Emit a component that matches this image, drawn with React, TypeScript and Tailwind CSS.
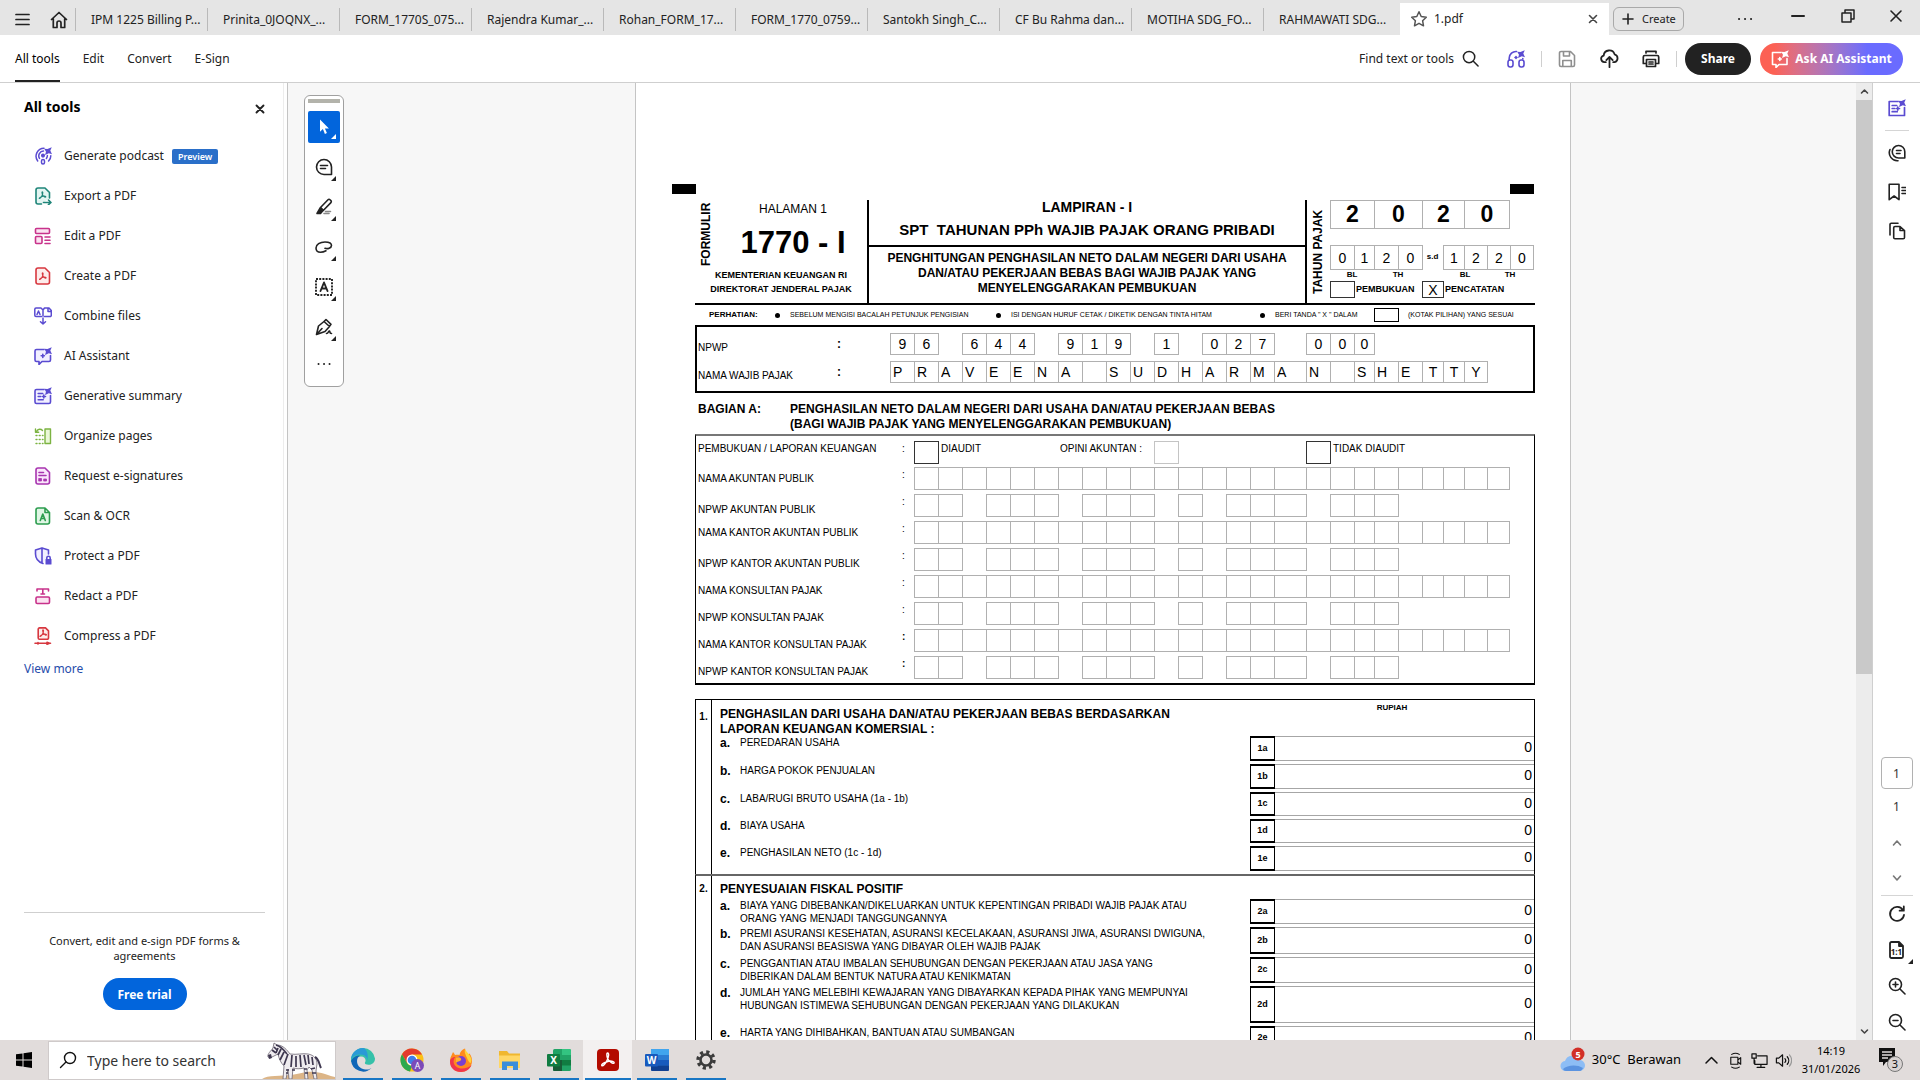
import type { ReactNode } from "react";
import clsx from "clsx";

const tabs = [
  "IPM 1225 Billing P...",
  "Prinita_0JOQNX_...",
  "FORM_1770S_075...",
  "Rajendra Kumar_...",
  "Rohan_FORM_17...",
  "FORM_1770_0759...",
  "Santokh Singh_C...",
  "CF Bu Rahma dan...",
  "MOTIHA SDG_FO...",
  "RAHMAWATI SDG...",
];

function Svg({ size = 18, box = 18, color = "#222", width = 1.6, children }: { size?: number; box?: number; color?: string; width?: number; children: ReactNode }) {
  return (
    <svg width={size} height={size} viewBox={`0 0 ${box} ${box}`} fill="none" stroke={color} strokeWidth={width} strokeLinecap="round" strokeLinejoin="round" className="shrink-0" aria-hidden="true">
      {children}
    </svg>
  );
}

// four-point star used on every AI tool
function Spark({ x = 14, y = 4, color = "#5a4bd1" }: { x?: number; y?: number; color?: string }) {
  return (
    <g transform={`translate(${x} ${y})`} fill={color} stroke="none">
      <path d="M3.8-3.8 2.3-.4 4 3.200 .8 2.200-3 4-2 .8-3.800-2.200-.6-2Z" />
    </g>
  );
}

function PdfMark({ x = 9, y = 9, color }: { x?: number; y?: number; color: string }) {
  return (
    <g transform={`translate(${x} ${y})`} stroke={color} strokeWidth="1.1">
      <path d="M-.2-3.6C.6-3.6.3-1.6-.3-.2-1 1.6-2.6 3.4-3.3 3 -3.6 2.2-.9.9.9.7 2.4.5 3.5.9 3.3 1.5 2.8 2.3.4.7-.2-1.4-.6-2.7-.7-3.6-.2-3.6Z" />
    </g>
  );
}

const purple = "#5a4bd1";

const tools: { name: string; badge?: string; icon: ReactNode }[] = [
  {
    name: "Generate podcast",
    badge: "Preview",
    icon: (
      <Svg color={purple} width={1.5}>
        <path d="M3.7 14A8 8 0 0 1 10 1.2M5.5 11.4A4.8 4.8 0 0 1 9.5 4.1M13.4 8.5c0 1.2-.4 2.2-1 3M16.8 8.8c0 2-.8 3.9-2.2 5.2" />
        <circle cx="9" cy="8.6" r="1.3" fill={purple} />
        <rect x="7.5" y="12.5" width="3" height="4.6" rx="1.5" />
        <Spark />
      </Svg>
    ),
  },
  {
    name: "Export a PDF",
    icon: (
      <Svg color="#1f8579">
        <path d="M7.5 17H4a2 2 0 0 1-2-2V3a2 2 0 0 1 2-2h7l4.5 4.5V11" fill="#e3f5f2" />
        <PdfMark x={8.5} y={8.5} color="#1f8579" />
        <path d="M9.5 15.5h7M14.5 13l2.500 2.500-2.500 2.200" />
      </Svg>
    ),
  },
  {
    name: "Edit a PDF",
    icon: (
      <Svg color="#c8328b">
        <rect x="1.5" y="1.5" width="14" height="5" rx="1" fill="#fbe3f1" />
        <rect x="1.5" y="9.5" width="6.5" height="7" rx="1" fill="#fbe3f1" />
        <path d="M11 10h5M11 13.2h5M11 16.5h5" />
      </Svg>
    ),
  },
  {
    name: "Create a PDF",
    icon: (
      <Svg color="#d7373f">
        <path d="M4 1h7l4.5 4.5V15a2 2 0 0 1-2 2H4a2 2 0 0 1-2-2V3a2 2 0 0 1 2-2Z" fill="#fdeceb" />
        <PdfMark x={8.8} y={9.5} color="#d7373f" />
      </Svg>
    ),
  },
  {
    name: "Combine files",
    icon: (
      <Svg color={purple} width={1.5}>
        <path d="M7.5 9.5H2A1.2 1.2 0 0 1 .8 8.3V2.2A1.2 1.2 0 0 1 2 1h5l2 2v6M9 3l1.500-2H15l2.300 2.500v4.800A1.200 1.200 0 0 1 16 9.500h-5.500M14 1.500v3h3M9 11v6M6.500 14.700 9 17l2.500-2.300" />
        <path d="M3 7.5 4.5 4 6 7.5" />
      </Svg>
    ),
  },
  {
    name: "AI Assistant",
    icon: (
      <Svg color={purple}>
        <path d="M10 2.5H2.5A1.5 1.5 0 0 0 1 4v9a1.500 1.500 0 0 0 1.500 1.500H5v3l3-3h7a1.500 1.500 0 0 0 1.500-1.500V8.500" fill="#f1efff" />
        <path d="M8.8 7.200v3.200M7.200 8.800h3.200" />
        <Spark />
      </Svg>
    ),
  },
  {
    name: "Generative summary",
    icon: (
      <Svg color={purple}>
        <path d="M10 2.5H2.5A1.5 1.5 0 0 0 1 4v11a1.500 1.500 0 0 0 1.500 1.500H15a1.500 1.500 0 0 0 1.500-1.500V8.500" fill="#f1efff" />
        <path d="M4.200 6.500h4.500M4.200 9.500h2.500M4.200 12.700h5M9.800 8v3M8.500 9.500h3" />
        <Spark />
      </Svg>
    ),
  },
  {
    name: "Organize pages",
    icon: (
      <Svg color="#7cb342" width={1.4}>
        <rect x="11" y="2" width="5.5" height="14.5" fill="#eaf8d8" />
        <path d="M8.500 3.500c-1.800-2-4.500-1.500-6 1M1.500 2v3.200h3.200" />
        <path d="M2 8.5h7M2 12.5h7M2 16.5h7" strokeDasharray="1 2.2" />
      </Svg>
    ),
  },
  {
    name: "Request e-signatures",
    icon: (
      <Svg color="#a835b0">
        <path d="M4 1h7l4.5 4.5V15a2 2 0 0 1-2 2H4a2 2 0 0 1-2-2V3a2 2 0 0 1 2-2Z" fill="#fae6fb" />
        <path d="M5 5.5h4.500M5 8.500h7" />
        <path d="M5 11.5h2.500V14H5ZM10 12h2.500v2H10Z" fill="#a835b0" strokeWidth=".8" />
      </Svg>
    ),
  },
  {
    name: "Scan & OCR",
    icon: (
      <Svg color="#2d9d4f">
        <path d="M4 1h7l4.5 4.5V15a2 2 0 0 1-2 2H4a2 2 0 0 1-2-2V3a2 2 0 0 1 2-2ZM11 1v4.500h4.500" fill="#e0f6e5" />
        <path d="M6.300 13.500 8.800 7l2.500 6.500M7.200 11.500h3.200" />
      </Svg>
    ),
  },
  {
    name: "Protect a PDF",
    icon: (
      <Svg color={purple}>
        <path d="M9 16.500C4.500 15 1.500 11.500 1.500 7V3L8 .9 14.500 3v4M8 1v15" fill="#f1efff" />
        <rect x="11.5" y="12" width="6" height="5.5" rx=".5" fill={purple} stroke="none" />
        <path d="M12.800 12v-1a1.700 1.700 0 0 1 3.400 0v1" />
      </Svg>
    ),
  },
  {
    name: "Redact a PDF",
    icon: (
      <Svg color="#c8328b">
        <rect x="2" y="10" width="13.5" height="6.5" rx="1.2" fill="#fbe3f1" />
        <path d="M3 4V2h11.500v2M8.800 2v5M7 7h3.500" />
      </Svg>
    ),
  },
  {
    name: "Compress a PDF",
    icon: (
      <Svg color="#d7373f">
        <path d="M5.500.9h6l3 3v7a1.300 1.300 0 0 1-1.300 1.300H5.500A1.300 1.300 0 0 1 4.200 10.900V2.200A1.300 1.300 0 0 1 5.500.9Z" fill="#fdeceb" />
        <PdfMark x={9.2} y={6.5} color="#d7373f" />
        <path d="M1 16.300h15.500M4 15.500v1.600M13 15.300l2.500 1-2.500 1" />
      </Svg>
    ),
  },
];

function TitleBar() {
  return (
    <div className="flex h-[35px] shrink-0 bg-[#e5e5e5] text-[12px] text-[#222]">
      <div className="flex w-[75px] shrink-0 items-center gap-5 pl-[15px] pt-1">
        <button aria-label="Menu">
          <Svg size={15} box={15} width={1.7}>
            <path d="M1 2.5h13M1 7.5h13M1 12.5h13" />
          </Svg>
        </button>
        <button aria-label="Home">
          <Svg size={18} width={1.7}>
            <path d="M1.500 8.500 9 1.500l7.500 7M3.300 7.500v9H7V12a2 2 0 0 1 4 0v4.500h3.700v-9" />
          </Svg>
        </button>
      </div>
      <div className="flex min-w-0 flex-1 pr-[5px] pt-2">
        {tabs.map((t) => (
          <button key={t} className="h-[23px] min-w-0 flex-1 overflow-hidden whitespace-nowrap border-l border-[#b9b9b9] pl-[15px] text-left">
            {t}
          </button>
        ))}
      </div>
      <div className="mt-[3px] flex w-[209px] shrink-0 items-center bg-white px-[10px]">
        <Svg size={18} color="#555" width={1.5}>
          <path d="m9 1.800 2.200 4.700 5.100.7-3.700 3.500.9 5.100L9 13.300l-4.500 2.500.9-5.100L1.700 7.200l5.100-.7Z" />
        </Svg>
        <span className="ml-1.5 flex-1">1.pdf</span>
        <button aria-label="Close tab">
          <Svg size={12} box={12} color="#444">
            <path d="m2.500 2.500 7 7M9.500 2.500l-7 7" />
          </Svg>
        </button>
      </div>
      <button className="ml-1 mt-[7px] flex h-[24px] w-[71px] shrink-0 items-center gap-2 rounded-md border border-[#a9a9a9] pl-2 text-[11px]">
        <Svg size={12} box={12}>
          <path d="M6 1v10M1 6h10" />
        </Svg>
        Create
      </button>
      <div className="flex w-[236px] shrink-0 items-center justify-end pb-1">
        <button aria-label="More" className="grid w-[56px] place-items-center pt-1.5">
          <Svg size={16} box={16} width={2}>
            <path d="M2 8h.1M8 8h.1M14 8h.1" />
          </Svg>
        </button>
        <button aria-label="Minimize" className="grid w-[50px] place-items-center">
          <Svg size={16} box={16} width={2}>
            <path d="M2 8h12" />
          </Svg>
        </button>
        <button aria-label="Restore" className="grid w-[49px] place-items-center">
          <Svg size={14} box={14} width={1.5}>
            <path d="M1 4h9v9H1ZM4 4V1h9v9h-3" />
          </Svg>
        </button>
        <button aria-label="Close" className="grid w-[48px] place-items-center">
          <Svg size={14} box={14}>
            <path d="m2 2 10 10M12 2 2 12" />
          </Svg>
        </button>
      </div>
    </div>
  );
}

function ToolBar() {
  return (
    <div className="flex h-[48px] shrink-0 items-center border-b border-[#cfcfcf] bg-white pl-[15px] pr-[17px] text-[12px] text-[#222]">
      <nav className="flex h-full flex-1 gap-[23px] pt-px">
        <button className="border-b-2 border-[#222] pt-0.5 text-black">All tools</button>
        <button>Edit</button>
        <button>Convert</button>
        <button>E-Sign</button>
      </nav>
      <button className="flex items-center gap-2">
        Find text or tools
        <Svg size={17}>
          <circle cx="7.5" cy="7.5" r="6" />
          <path d="m12 12 5 5" />
        </Svg>
      </button>
      <button aria-label="Listen" className="ml-4 grid w-[42px] place-items-center">
        <Svg color={purple}>
          <path d="M2.200 10V8A6.800 6.800 0 0 1 9.500 1.500M15.800 9v-.5" />
          <rect x="1" y="10" width="5" height="7" rx="2.200" />
          <rect x="12" y="10" width="5" height="7" rx="2.200" />
          <path d="M9 6.500v2M8 7.500h2" />
          <Spark />
        </Svg>
      </button>
      <span className="mx-1 h-4 w-px bg-[#cfcfcf]" />
      <button aria-label="Save" className="grid w-[42px] place-items-center">
        <Svg color="#8f8f8f">
          <path d="M3 1.500h9.500l4 4V15a1.500 1.500 0 0 1-1.500 1.500H3A1.500 1.500 0 0 1 1.500 15V3A1.500 1.500 0 0 1 3 1.500ZM5.500 1.500v4.500h6V1.500M4.800 16v-5.500h8.500V16" />
        </Svg>
      </button>
      <button aria-label="Upload" className="grid w-[42px] place-items-center">
        <Svg size={19} width={1.7}>
          <path d="M5.500 12.500H4.200A3.200 3.200 0 0 1 3.500 6.200 5.300 5.300 0 0 1 13.800 5a3.900 3.900 0 0 1 0 7.500h-1.300M9 17.200V8M6 10.500l3-3 3 3" />
        </Svg>
      </button>
      <button aria-label="Print" className="grid w-[42px] place-items-center">
        <Svg width={1.7}>
          <path d="M3.500 13.500H1.300V7A1.500 1.500 0 0 1 2.800 5.500h12.400A1.500 1.500 0 0 1 16.700 7v6.500h-2.200M4 3V1.300h10V3M4.500 9.500h9v7h-9ZM7 12h4M7 14h4" />
        </Svg>
      </button>
      <span className="ml-1 mr-2 h-4 w-px bg-[#cfcfcf]" />
      <button className="h-8 w-[66px] rounded-full bg-[#222] font-bold text-white">Share</button>
      <button className="ml-[9px] flex h-8 w-[143px] items-center justify-center gap-1.5 whitespace-nowrap rounded-full bg-linear-to-r from-[#fc6154] from-10% to-[#6a6bff] to-75% font-bold text-white">
        <Svg color="#fff">
          <path d="M10 2.500H1.500v12H5v3l3-3h8v-6M8.800 7.500v3M7.300 9h3" />
          <Spark color="#fff" />
        </Svg>
        Ask AI Assistant
      </button>
    </div>
  );
}

function Sidebar() {
  return (
    <aside className="flex w-[288px] shrink-0 border-r border-[#c4c4c4] bg-white text-[#222]">
      <div className="flex flex-1 flex-col border-r border-[#ededed] pl-6 pr-[18px] pt-[13px]">
        <div className="flex h-5 items-center justify-between">
          <h2 className="text-[14px] font-bold text-black">All tools</h2>
          <button aria-label="Close panel" className="pt-1.5">
            <Svg size={10} box={10} width={1.9}>
              <path d="m1.500 1.500 7 7M8.500 1.500l-7 7" />
            </Svg>
          </button>
        </div>
        <ul className="mt-5 text-[12px]">
          {tools.map((t) => (
            <li key={t.name}>
              <button className="flex h-10 items-center gap-3 pl-2.5">
                {t.icon}
                {t.name}
                {t.badge && <span className="-ml-1 rounded-xs bg-[#2a6fc9] px-1.5 text-[9px] font-semibold leading-[15px] text-white">{t.badge}</span>}
              </button>
            </li>
          ))}
        </ul>
        <a href="#" className="text-[12px] leading-[26px] text-[#274dab]">View more</a>
        <div className="mt-auto border-t border-[#cfcfcf] px-4 pb-[30px] pt-5 text-center text-[11px] leading-[15px]">
          Convert, edit and e-sign PDF forms &amp; agreements
          <button className="mx-auto mt-[15px] block h-8 w-[84px] rounded-full bg-[#0265dc] text-[12px] font-bold text-white">Free trial</button>
        </div>
      </div>
      <div className="w-[3px]" />
    </aside>
  );
}

function QuickTool({ label, children }: { label: string; children: ReactNode }) {
  return (
    <button aria-label={label} className="relative grid h-10 w-8 place-items-center">
      {children}
      <svg className="absolute bottom-1.5 right-1" width="5" height="5" viewBox="0 0 5 5" aria-hidden="true">
        <path d="M5 0v5H0Z" fill="#222" />
      </svg>
    </button>
  );
}

function QuickTools() {
  return (
    <div className="mt-3 flex h-[292px] w-10 flex-col items-center rounded-md border border-[#a0a0a0] bg-white pt-[3px]">
      <div className="h-1 w-8 bg-[#b3b3ab]" />
      <button aria-label="Select" className="relative mt-2 grid h-8 w-8 shrink-0 place-items-center rounded-xs bg-[#0265dc]">
        <svg width="12" height="16" viewBox="0 0 12 16" aria-hidden="true">
          <path d="M2 .5v12.200l2.900-2.600 2 4.800 2-.9-2-4.600h4Z" fill="#fff" />
        </svg>
        <svg className="absolute bottom-1 right-1" width="5" height="5" viewBox="0 0 5 5" aria-hidden="true">
          <path d="M5 0v5H0Z" fill="#fff" />
        </svg>
      </button>
      <div className="mt-1">
        <QuickTool label="Comment">
          <Svg>
            <path d="M9 1.500a7.500 7.500 0 1 0 0 15h7.500V9A7.500 7.500 0 0 0 9 1.500ZM5.500 7.500h7M5.500 10.500h5" />
          </Svg>
        </QuickTool>
        <QuickTool label="Highlight">
          <Svg>
            <path d="M5.500 9.500 13 1.700a1.400 1.400 0 0 1 2 0l.9.9a1.400 1.400 0 0 1 0 2L8.500 12.300Z" />
            <path d="M5.200 10 2 15.500h3.500L8 12.500Z" fill="#222" />
            <path d="M9 15.500h5M10.500 13.500h5" stroke="#888" />
          </Svg>
        </QuickTool>
        <QuickTool label="Draw">
          <Svg>
            <path d="M11 12.800c-1.500.8-3.500 1.500-5.500 1.500-3 0-4.500-1.800-4.500-4.300 0-3.500 4-6 9-6 4 0 6.500 1.200 6.500 3.500 0 2.500-4 3.800-6.500 2.800" />
          </Svg>
        </QuickTool>
        <QuickTool label="Select text">
          <Svg width={1.9}>
            <rect x="1" y="1" width="16" height="16" strokeDasharray="2 1.200" strokeLinecap="butt" />
            <path d="M5.500 13 9 4.500l3.500 8.500M7 10.500h4" />
          </Svg>
        </QuickTool>
        <QuickTool label="Sign">
          <Svg>
            <path d="M1.500 16.500 3.500 8 9 3.500l5.500 5L10 13.500ZM9 3.500l2-2 5 4.800-1.700 2.200M2 16l5-5.500M11.500 15.500c2 0 2-3 3-2.500s-.5 2.500 2 2.500" />
          </Svg>
        </QuickTool>
      </div>
      <button aria-label="More tools" className="mt-2">
        <Svg width={1.9}>
          <path d="M3.500 9h.1M9 9h.1M14.500 9h.1" />
        </Svg>
      </button>
    </div>
  );
}

// "." leaves a gap between boxes, "#" is an empty box
function Comb({ label, pattern, className }: { label: string; pattern: string; className: string }) {
  return (
    <div className={clsx("grid", className)}>
      {pattern.split("").map((c, i) =>
        c === "." ? (
          <span key={i} />
        ) : (
          <input
            key={i}
            aria-label={`${label} ${i + 1}`}
            maxLength={1}
            defaultValue={c === "#" ? "" : c.trim()}
            className={clsx(
              "h-full w-[calc(100%+1px)] min-w-0 border border-[#b0b0b0] bg-transparent text-[14px] leading-4 outline-none",
              /[A-Z]/.test(c) && i < 22 ? "pl-0.5 text-left" : "text-center",
            )}
          />
        ),
      )}
    </div>
  );
}

const headerComb = "grid-cols-[repeat(16,24px)_32px_24px_24px_20px_24px_24px_21px_21px_23px]";
const sectionComb = "h-[23px] grid-cols-[repeat(15,24px)_32px_24px_24px_20px_24px_24px_21px_21px_23px_22px]";

function FormHeader() {
  return (
    <header className="flex h-[105px] border-b-2 border-black">
      <div className="w-[174px] border-r-2 border-black">
        <div className="flex h-[68px]">
          <div className="w-[22px] rotate-180 text-center text-[12px] font-bold leading-[22px] [writing-mode:vertical-rl]">FORMULIR</div>
          <div className="flex-1 pl-0.5 text-center">
            <div className="text-[12px] leading-[18px]">HALAMAN 1</div>
            <div className="pt-2 text-[31px] font-bold leading-[34px]">1770 - I</div>
          </div>
        </div>
        <div className="text-center text-[9px] font-bold leading-[14px]">
          KEMENTERIAN KEUANGAN RI
          <br />
          DIREKTORAT JENDERAL PAJAK
        </div>
      </div>
      <div className="flex-1 border-r-2 border-black text-center font-bold">
        <div className="flex h-[47px] flex-col justify-between border-b-2 border-black pb-2 leading-[15px]">
          <div className="text-[14px]">LAMPIRAN - I</div>
          <div className="whitespace-pre text-[15px]">SPT  TAHUNAN PPh WAJIB PAJAK ORANG PRIBADI</div>
        </div>
        <div className="whitespace-nowrap pt-1 text-[12px] leading-[15px]">
          PENGHITUNGAN PENGHASILAN NETO DALAM NEGERI DARI USAHA
          <br />
          DAN/ATAU PEKERJAAN BEBAS BAGI WAJIB PAJAK YANG
          <br />
          MENYELENGGARAKAN PEMBUKUAN
        </div>
      </div>
      <div className="flex w-[228px]">
        <div className="w-[23px] rotate-180 whitespace-nowrap text-center text-[12px] font-bold leading-[23px] [writing-mode:vertical-rl]">TAHUN PAJAK</div>
        <div className="flex-1 text-[8px] font-bold">
          <div className="grid h-[29px] grid-cols-[44px_48px_42px_45px]">
            {["2", "0", "2", "0"].map((d, i) => (
              <input key={i} aria-label={`Tahun ${i + 1}`} defaultValue={d} maxLength={1} className="h-full w-[calc(100%+1px)] min-w-0 border border-[#b0b0b0] text-center text-[23px] font-bold leading-6 outline-none" />
            ))}
          </div>
          <div className="mt-4 flex h-[25px] font-normal">
            <Comb label="Dari" pattern="0120" className="grid-cols-[24px_20px_24px_24px]" />
            <span className="w-[21px] pt-1.5 text-center font-bold">s.d</span>
            <Comb label="Sampai" pattern="1220" className="grid-cols-[21px_23px_23px_23px]" />
          </div>
          <div className="grid h-[11px] grid-cols-[44px_48px_21px_44px_46px] text-center leading-[10px]">
            <span>BL</span>
            <span>TH</span>
            <span />
            <span>BL</span>
            <span>TH</span>
          </div>
          <div className="flex h-[17px] items-center text-[9px]">
            <input id="pembukuan" type="checkbox" className="h-[17px] w-[25px] appearance-none border border-[#333]" />
            <label htmlFor="pembukuan" className="w-[67px] pl-px">PEMBUKUAN</label>
            <input
              id="pencatatan"
              type="checkbox"
              defaultChecked
              className="grid h-[17px] w-[22px] appearance-none place-items-center border border-[#333] checked:before:text-[14px] checked:before:font-normal checked:before:leading-4 checked:before:content-['X']"
            />
            <label htmlFor="pencatatan" className="pl-px">PENCATATAN</label>
          </div>
        </div>
      </div>
    </header>
  );
}

const auditRows = [
  { label: "NAMA AKUNTAN PUBLIK", npwp: false, high: true },
  { label: "NPWP AKUNTAN PUBLIK", npwp: true },
  { label: "NAMA KANTOR AKUNTAN PUBLIK", npwp: false, high: true },
  { label: "NPWP KANTOR AKUNTAN PUBLIK", npwp: true },
  { label: "NAMA KONSULTAN PAJAK", npwp: false },
  { label: "NPWP KONSULTAN PAJAK", npwp: true },
  { label: "NAMA KANTOR KONSULTAN PAJAK", npwp: false, bold: true },
  { label: "NPWP KANTOR KONSULTAN PAJAK", npwp: true, bold: true },
];

function AuditSection() {
  return (
    <section className="border border-y-2 border-black border-t-[#777] pt-[5px] text-[10px] leading-3">
      <div className="flex h-[26px]">
        <span className="w-[206px] pl-0.5 pt-0.5">PEMBUKUAN / LAPORAN KEUANGAN</span>
        <span className="w-3 pt-0.5">:</span>
        <input id="diaudit" type="checkbox" className="h-[23px] w-[25px] appearance-none border border-[#333]" />
        <label htmlFor="diaudit" className="w-[121px] pl-0.5 pt-0.5">DIAUDIT</label>
        <label htmlFor="opini" className="w-[94px] pt-0.5">OPINI AKUNTAN :</label>
        <input id="opini" className="h-[23px] w-[25px] border border-[#c4c4c4]" />
        <input id="tidak" type="checkbox" className="ml-[127px] h-[23px] w-[25px] appearance-none border border-[#333]" />
        <label htmlFor="tidak" className="pl-0.5 pt-0.5">TIDAK DIAUDIT</label>
      </div>
      {auditRows.map((r) => (
        <div key={r.label} className="flex h-[27px]">
          <span className={clsx("w-[206px] pl-0.5", r.high ? "pt-1.5" : "pt-2.5")}>{r.label}</span>
          <span className={clsx("w-3 pt-0.5", r.bold && "font-bold")}>:</span>
          <Comb label={r.label} pattern={r.npwp ? "##.###.###.#.###.###" : "#########################"} className={sectionComb} />
        </div>
      ))}
    </section>
  );
}

type Line = { code: string; text: string[]; height: string };

const commercial: Line[] = [
  { code: "1a", text: ["PEREDARAN USAHA"], height: "h-[28px]" },
  { code: "1b", text: ["HARGA POKOK PENJUALAN"], height: "h-[28px]" },
  { code: "1c", text: ["LABA/RUGI BRUTO USAHA (1a - 1b)"], height: "h-[27px]" },
  { code: "1d", text: ["BIAYA USAHA"], height: "h-[27px]" },
  { code: "1e", text: ["PENGHASILAN NETO (1c - 1d)"], height: "h-[28px]" },
];

const fiscal: Line[] = [
  { code: "2a", text: ["BIAYA YANG DIBEBANKAN/DIKELUARKAN UNTUK KEPENTINGAN PRIBADI WAJIB PAJAK ATAU", "ORANG YANG MENJADI TANGGUNGANNYA"], height: "h-[28px]" },
  { code: "2b", text: ["PREMI ASURANSI KESEHATAN, ASURANSI KECELAKAAN, ASURANSI JIWA, ASURANSI DWIGUNA,", "DAN ASURANSI BEASISWA YANG DIBAYAR OLEH WAJIB PAJAK"], height: "h-[30px]" },
  { code: "2c", text: ["PENGGANTIAN ATAU IMBALAN SEHUBUNGAN DENGAN PEKERJAAN ATAU JASA YANG", "DIBERIKAN DALAM BENTUK NATURA ATAU KENIKMATAN"], height: "h-[29px]" },
  { code: "2d", text: ["JUMLAH YANG MELEBIHI KEWAJARAN YANG DIBAYARKAN KEPADA PIHAK YANG MEMPUNYAI", "HUBUNGAN ISTIMEWA SEHUBUNGAN DENGAN PEKERJAAN YANG DILAKUKAN"], height: "h-[40px]" },
  { code: "2e", text: ["HARTA YANG DIHIBAHKAN, BANTUAN ATAU SUMBANGAN"], height: "h-[27px]" },
];

function AmountLine({ line }: { line: Line }) {
  return (
    <div className={clsx("flex pb-[3px]", line.height)}>
      <span className="w-5 text-[12px] font-bold leading-[14px]">{line.code[1]}.</span>
      <label htmlFor={line.code} className="flex-1 whitespace-nowrap text-[10px] leading-[13px]">
        {line.text.map((t) => (
          <span key={t} className="block">{t}</span>
        ))}
      </label>
      <span className="grid w-[25px] place-items-center border border-y-2 border-black text-[9px] font-bold">{line.code}</span>
      <input id={line.code} defaultValue="0" className="w-[259px] border-y border-[#a6a6a6] pb-0.5 pr-0.5 text-right text-[14px] outline-none" />
    </div>
  );
}

function TaxForm() {
  return (
    <main className="w-[936px] shrink-0 border-x border-[#c4c4c4] bg-white pt-[101px] font-['Liberation_Sans',Arial,sans-serif] text-black">
      <div className="flex justify-between px-9">
        <div className="h-2.5 w-6 bg-black" />
        <div className="h-2.5 w-6 bg-black" />
      </div>
      <div className="ml-[59px] mr-[35px] mt-1.5">
        <FormHeader />
        <div className="flex h-5 items-center whitespace-nowrap pl-[14px] text-[7px]">
          <span className="w-[66px] text-[8px] font-bold">PERHATIAN:</span>
          <span className="flex w-[221px] items-center gap-2.5">
            <i className="size-[5px] rounded-full bg-black" />
            SEBELUM MENGISI BACALAH PETUNJUK PENGISIAN
          </span>
          <span className="flex w-[264px] items-center gap-2.5">
            <i className="size-[5px] rounded-full bg-black" />
            ISI DENGAN HURUF CETAK / DIKETIK DENGAN TINTA HITAM
          </span>
          <span className="flex w-[114px] items-center gap-2.5">
            <i className="size-[5px] rounded-full bg-black" />
            BERI TANDA " X " DALAM
          </span>
          <span className="h-[14px] w-[25px] border border-black" />
          <span className="ml-[9px]">(KOTAK PILIHAN) YANG SESUAI</span>
        </div>

        <section className="grid grid-cols-[140px_53px_auto] grid-rows-[22px_22px] gap-y-1.5 border-2 border-black pb-2 pt-1.5 text-[10px] leading-[14px]">
          <span className="self-end pl-px">NPWP</span>
          <span className="self-center text-[12px] font-bold">:</span>
          <Comb label="NPWP" pattern="96.644.919.1.027.000" className={headerComb} />
          <span className="self-end pl-px">NAMA WAJIB PAJAK</span>
          <span className="self-center text-[12px] font-bold">:</span>
          <Comb label="Nama wajib pajak" pattern="PRAVEENA SUDHARMAN SHETTY" className={headerComb} />
        </section>

        <h2 className="flex pb-0.5 pl-[3px] pt-[9px] text-[12px] font-bold leading-[15px]">
          <span className="w-[92px]">BAGIAN A:</span>
          <span>
            PENGHASILAN NETO DALAM NEGERI DARI USAHA DAN/ATAU PEKERJAAN BEBAS
            <br />
            (BAGI WAJIB PAJAK YANG MENYELENGGARAKAN PEMBUKUAN)
          </span>
        </h2>

        <AuditSection />

        <section className="mt-[14px] flex border-x border-t border-black">
          <span className="w-4 border-r border-black pt-2.5 text-center text-[10px] font-bold leading-[14px]">1.</span>
          <div className="flex-1 pl-2">
            <div className="flex h-9 font-bold">
              <h3 className="flex-1 whitespace-nowrap pt-[7px] text-[12px] leading-[15px]">
                PENGHASILAN DARI USAHA DAN/ATAU PEKERJAAN BEBAS BERDASARKAN
                <br />
                LAPORAN KEUANGAN KOMERSIAL :
              </h3>
              <span className="w-[284px] pt-[3px] text-center text-[8px] leading-[10px]">RUPIAH</span>
            </div>
            {commercial.map((l) => (
              <AmountLine key={l.code} line={l} />
            ))}
          </div>
        </section>
        <section className="flex border-x border-t-2 border-black border-t-[#666]">
          <span className="w-4 border-r border-black pt-1.5 text-center text-[10px] font-bold leading-[14px]">2.</span>
          <div className="flex-1 pb-8 pl-2">
            <h3 className="pb-[3px] pt-1.5 text-[12px] font-bold leading-[14px]">PENYESUAIAN FISKAL POSITIF</h3>
            {fiscal.map((l) => (
              <AmountLine key={l.code} line={l} />
            ))}
          </div>
        </section>
      </div>
    </main>
  );
}

function ScrollBar() {
  return (
    <div className="flex w-4 shrink-0 flex-col items-center bg-[#ececec]">
      <div className="grid h-[17px] place-items-center">
        <Svg size={9} box={9} color="#444">
          <path d="m1.500 6 3-3 3 3" />
        </Svg>
      </div>
      <div className="h-[574px] w-full bg-[#c9c9c9]" />
      <div className="mt-auto grid h-[17px] place-items-center">
        <Svg size={9} box={9} color="#444">
          <path d="m1.500 3 3 3 3-3" />
        </Svg>
      </div>
    </div>
  );
}

function RightRail() {
  return (
    <aside className="flex w-12 shrink-0 flex-col items-center border-l border-[#cfcfcf] bg-white pt-[5px] text-[12px] text-[#333]">
      <button aria-label="Generative summary" className="grid h-10 place-items-center">
        <Svg color={purple} width={1.7}>
          <path d="M10 2.500H1.200v14h15.300v-8M4.200 6.500h4.500M4.200 9.500h2.500M4.200 12.700h5M9.800 8v3M8.500 9.500h3" />
          <Spark />
        </Svg>
      </button>
      <div className="my-0.5 h-px w-6 bg-[#d5d5d5]" />
      <button aria-label="Comments" className="grid h-[39px] place-items-center">
        <Svg>
          <path d="M10.500 1.500a6.200 6.200 0 1 0 0 12.500h6.300V7.700a6.200 6.200 0 0 0-6.300-6.200ZM8.500 6.500h4.500M8.500 9.500h3.500M2 5.500a8 8 0 0 0 8 11.200" />
        </Svg>
      </button>
      <button aria-label="Bookmarks" className="grid h-[39px] place-items-center">
        <Svg>
          <path d="M1.200 1.200h9.800v15.500l-4.900-3.700-4.900 3.700ZM14 4.500h3.500M14 7.500h3.500M14 10.500h3.500" />
        </Svg>
      </button>
      <button aria-label="Pages" className="grid h-[39px] place-items-center">
        <Svg>
          <path d="M7 4.500h5l4.500 4V15.500a1.300 1.300 0 0 1-1.300 1.300H7a1.300 1.300 0 0 1-1.300-1.300V5.800A1.300 1.300 0 0 1 7 4.500ZM12 4.500v4h4.500M2 13V2.500a1.300 1.300 0 0 1 1.300-1.300H10" />
        </Svg>
      </button>
      <input aria-label="Page" defaultValue="1" className="mt-auto h-8 w-8 rounded border border-[#b1b1b1] text-center" />
      <span className="h-9 leading-9">1</span>
      <button aria-label="Previous page" className="grid h-[35px] place-items-center">
        <Svg size={10} box={10} color="#777">
          <path d="m1.500 7 3.500-4 3.500 4" />
        </Svg>
      </button>
      <button aria-label="Next page" className="grid h-[35px] place-items-center">
        <Svg size={10} box={10} color="#777">
          <path d="m1.500 3 3.500 4 3.500-4" />
        </Svg>
      </button>
      <div className="h-px w-8 bg-[#d5d5d5]" />
      <button aria-label="Rotate" className="grid h-9 place-items-center">
        <Svg width={1.8}>
          <path d="M15 5.200A7 7 0 1 0 16 9.800M15.800 1.500v4.200h-4.200" />
        </Svg>
      </button>
      <button aria-label="Actual size" className="relative grid h-9 w-9 place-items-center">
        <Svg width={1.8}>
          <path d="M3.500 1H11l4 4v10.500a1.500 1.500 0 0 1-1.500 1.500h-10A1.500 1.500 0 0 1 2 15.500v-13A1.500 1.500 0 0 1 3.500 1ZM11 1v4h4" />
          <text x="8.5" y="14" fontSize="8" fontWeight="700" textAnchor="middle" fill="#222" stroke="none">1:1</text>
        </Svg>
        <svg className="absolute bottom-1 right-0.5" width="5" height="5" viewBox="0 0 5 5" aria-hidden="true">
          <path d="M5 0v5H0Z" fill="#222" />
        </svg>
      </button>
      <button aria-label="Zoom in" className="grid h-9 place-items-center">
        <Svg>
          <circle cx="7.5" cy="7.5" r="6" />
          <path d="m12 12 5 5M7.500 5v5M5 7.500h5" />
        </Svg>
      </button>
      <button aria-label="Zoom out" className="grid h-9 place-items-center">
        <Svg>
          <circle cx="7.5" cy="7.5" r="6" />
          <path d="m12 12 5 5M5 7.500h5" />
        </Svg>
      </button>
    </aside>
  );
}

function AppIcon({ name, children, active }: { name: string; children: ReactNode; active?: boolean }) {
  return (
    <button aria-label={name} className={clsx("flex h-10 w-[49px] flex-col items-center", active && "bg-[#f3f0f0]")}>
      <svg width="24" height="24" viewBox="0 0 24 24" className="mt-2" aria-hidden="true">
        {children}
      </svg>
      <span className={clsx("mt-auto h-0.5 bg-[#1876c4]", active ? "w-[46px]" : "w-10")} />
    </button>
  );
}

function Zebra() {
  return (
    <svg width="74" height="39" viewBox="0 0 74 39" className="shrink-0" aria-hidden="true">
      <path d="M0 39c4-5 20-4 30-5s14-4 24-3 14 4 20 5v3Z" fill="#dcb587" />
      <path d="M7 16c-1-3 3-6 5-9l1-5 3 2c6 0 10 5 13 9 7 1 13-1 18 0 6 1 9 5 9 10l-1 7 1 8h-3l-2-9-3-3-2 3 1 9h-3l-1-11c-4 1-8 1-11 0l-1 11h-3l-1-10-2 10h-3l1-13c-3-3-5-7-6-12l-8 4Z" fill="#efecef" stroke="#6d6672" strokeWidth=".8" />
      <path d="M15 4c5 1 8 5 11 9M17 7l-2 5M20 8l-3 6M23 11l-4 8M27 13l-4 11M31 14l-1 12M35 15v11M39 14l1 12M43 14l2 10M47 14l1 9M51 16l1 8M25 29h3M31 29h3M43 28h3M25 32h2M44 32h3M50 28l4-1M51 32h4M11 9l4 3M13 6l3 3" stroke="#3f3850" strokeWidth="1.7" fill="none" />
      <path d="M54 16c4 2 4 7 6 11" stroke="#3f3850" strokeWidth="2" fill="none" />
      <path d="m7 14 3-1 1 4-3 1Z" fill="#3f3850" />
    </svg>
  );
}

function Taskbar() {
  return (
    <footer className="flex h-10 shrink-0 items-center bg-[#e1dcdb] text-[14px] text-black">
      <button aria-label="Start" className="grid w-12 place-items-center">
        <svg width="16" height="16" viewBox="0 0 16 16" aria-hidden="true">
          <path d="M0 2.300 6.500 1.400v6.100H0ZM7.500 1.200 16 0v7.500H7.500ZM0 8.500h6.500v6.100L0 13.700ZM7.500 8.500H16V16l-8.500-1.200Z" />
        </svg>
      </button>
      <label className="flex h-[39px] w-[288px] items-center overflow-hidden border border-[#cfcaca] bg-white pl-2.5">
        <Svg color="#111" width={1.4}>
          <circle cx="11" cy="7" r="5.5" />
          <path d="m7 11-5.500 5.500" />
        </Svg>
        <input aria-label="Search" placeholder="Type here to search" className="ml-2.5 min-w-0 flex-1 placeholder:text-[#333]" />
        <Zebra />
      </label>
      <div className="ml-0.5 flex flex-1">
        <AppIcon name="Edge">
          <path d="M12 0a12 12 0 0 1 12 10.500c0 4-3 6.300-6.600 6.300-2.500 0-4-1-3.400-2.300C15.500 12 14 8.500 10 8.500 5 8.500 1.500 12 .2 14.500A12 12 0 0 1 12 0Z" fill="#35c1a9" />
          <path d="M12 0C5 0 0 6 0 12c1.500-4 5-5.500 9.500-5.500 4.500 0 7 3 6.500 6 2-4 0-12.500-4-12.500Z" fill="#2a9ad6" />
          <path d="M.1 13C1.500 9.500 5 7.500 9 7.500c-3 2-3.500 5-2.500 8.500 1.500 4 6 6 11 5.500l3-1.500A12 12 0 0 1 .1 13Z" fill="#1067b8" />
        </AppIcon>
        <AppIcon name="Chrome">
          <circle cx="12" cy="12" r="11.5" fill="#fbc116" />
          <path d="M12 .5A11.500 11.500 0 0 1 22 6.500H12L7 15 2 6.300A11.500 11.500 0 0 1 12 .5Z" fill="#e33b2e" />
          <path d="M2 6.300 7 15c1 2 3 2.500 5 2.500l-2 5.900A11.500 11.500 0 0 1 2 6.300Z" fill="#2da94f" />
          <circle cx="12" cy="12" r="5.5" fill="#fff" />
          <circle cx="12" cy="12" r="4.3" fill="#3f7ee8" />
          <circle cx="17.5" cy="17.5" r="6.5" fill="#7b4bb8" />
          <text x="17.5" y="20.5" fontSize="8.5" fill="#fff" textAnchor="middle">A</text>
        </AppIcon>
        <AppIcon name="Firefox">
          <path d="M12 24C5.500 24 1 19 1 13.500 1 9 3 7 4 4c1 1 1.500 2 2 3 1.500-.5 3-.5 4.500 0C11 4 13 1.500 16 .5c0 3 2 4.500 3 6l1.500-1c2 2.500 2.700 5.500 2.500 8C22.500 19.500 18 24 12 24Z" fill="#ff8a1e" />
          <path d="M16 .5c0 3 6 6 6.500 11.500C22 17 20 15 18 10c-1-3-3-5-2-9.500Z" fill="#ffd43a" />
          <path d="M1 13.500C1 20 6 24 12 24c5 0 9-3 10.500-7-4 4-12 5-16 1-3-3-2-7 0-9-3 0-5.500 2-5.500 4.500Z" fill="#f0364c" />
          <circle cx="12" cy="13" r="5" fill="#7a3fd0" />
          <path d="M7 10c3-2 6 0 5 2s-4 1-5 3Z" fill="#ffb02e" />
        </AppIcon>
        <AppIcon name="File Explorer">
          <path d="M1 3h8l2 2.500h11V20H1Z" fill="#f0b72f" />
          <path d="M1 7.500h21V20H1Z" fill="#ffd766" />
          <path d="M4 22v-8.500h16V22h-5v-4H9v4Z" fill="#3a8edb" />
        </AppIcon>
        <AppIcon name="Excel">
          <rect x="6" y="1" width="18" height="22" rx="1.5" fill="#21a366" />
          <path d="M6 12h9v11H7.500A1.500 1.500 0 0 1 6 21.500Z" fill="#185c37" />
          <path d="M15 1h7.500A1.500 1.500 0 0 1 24 2.500V7h-9Z" fill="#33c481" />
          <path d="M15 12h9v5.500h-9Z" fill="#107c41" />
          <rect y="6" width="13" height="12.5" rx="1" fill="#107c41" />
          <text x="6.5" y="16" fontSize="10" fontWeight="700" fill="#fff" textAnchor="middle">X</text>
        </AppIcon>
        <AppIcon name="Acrobat" active>
          <rect x="1" y="1" width="22" height="22" rx="4" fill="#b30b00" />
          <path d="M11.500 5c2 0 1 4-.3 7-1.600 3.700-4.200 6.300-5.400 5.700-1-1.500 3.500-4 7-4.500 3-.4 5.700.2 5.400 1.700-.5 1.500-5.500-1-6.800-5C10.800 8 10.500 5 11.500 5Z" fill="none" stroke="#fff" strokeWidth="1.4" />
        </AppIcon>
        <AppIcon name="Word">
          <rect x="6" y="1" width="18" height="22" rx="1.5" fill="#2b7cd3" />
          <path d="M6 1h18v6H6Z" fill="#41a5ee" />
          <path d="M6 12h18v5.500H6Z" fill="#185abd" />
          <path d="M6 17.500h18v4a1.500 1.500 0 0 1-1.500 1.500h-15A1.500 1.500 0 0 1 6 21.500Z" fill="#103f91" />
          <rect y="6" width="13" height="12.5" rx="1" fill="#185abd" />
          <text x="6.5" y="16" fontSize="10" fontWeight="700" fill="#fff" textAnchor="middle">W</text>
        </AppIcon>
        <AppIcon name="Settings">
          <circle cx="12" cy="12" r="5.5" fill="none" stroke="#3b3b3b" strokeWidth="2.6" />
          <circle cx="12" cy="12" r="8" fill="none" stroke="#3b3b3b" strokeWidth="3.4" strokeDasharray="3.14 3.14" />
        </AppIcon>
      </div>
      <div className="flex items-center pr-5">
        <svg width="26" height="26" viewBox="0 0 26 26" aria-hidden="true">
          <path d="M6 24a5 5 0 0 1-1-10 7.500 7.500 0 0 1 14-1 5.500 5.500 0 0 1 1 11Z" fill="#8dbdf5" />
          <path d="M3 22c4-4 14-5 20-1-1 2-2 3-3 3H6c-1.500 0-2.500-1-3-2Z" fill="#5b93e0" />
          <circle cx="18" cy="7" r="6.5" fill="#d22f27" />
          <text x="18" y="10.5" fontSize="9" fontWeight="700" fill="#fff" textAnchor="middle">5</text>
        </svg>
        <span className="ml-1.5 whitespace-pre text-[13px]">30°C  Berawan</span>
        <div className="ml-[22px] flex gap-[7px]">
          <Svg size={17} box={17} color="#111" width={1.5}>
            <path d="m3 11 5.500-5.500L14 11" />
          </Svg>
          <Svg size={17} color="#111" width={1.2}>
            <path d="M4 5.500h7.500v7.500H4ZM11.500 8.500l3-2.500v7l-3-2.500M5 2.500c2.500-1.500 5.500-1.500 8 0M5 16c2.500 1.500 5.500 1.500 8 0" />
          </Svg>
          <Svg size={17} color="#111" width={1.3}>
            <path d="M7 4h10v9H4V9M10.500 13v3M6.500 16.300h8M1 2h4.500v4.500H1ZM3.300 6.500V12" />
          </Svg>
          <Svg size={17} color="#111" width={1.3}>
            <path d="M1.500 6.500H4L8 3v12l-4-3.500H1.500ZM10.500 7a3 3 0 0 1 0 4M13 5a6 6 0 0 1 0 8" />
            <path d="M15.300 3a9 9 0 0 1 0 12" stroke="#999" />
          </Svg>
        </div>
        <div className="ml-1 w-[70px] text-center text-[11px] leading-[18px]">
          14:19
          <br />
          31/01/2026
        </div>
        <svg width="26" height="26" viewBox="0 0 26 26" className="-mr-1 ml-3" aria-hidden="true">
          <path d="M1 1h16v14H8l-3 4v-4H1Z" fill="#111" />
          <path d="M4 5h10M4 8h10M4 11h6" stroke="#e1dcdb" strokeWidth="1.3" />
          <circle cx="17" cy="17" r="7.5" fill="#d9d4d3" stroke="#777" />
          <text x="17" y="21" fontSize="11" textAnchor="middle" fill="#111">3</text>
        </svg>
      </div>
    </footer>
  );
}

export default function App() {
  return (
    <div className="flex h-screen flex-col overflow-hidden bg-white font-['Noto_Sans','Open_Sans',sans-serif]">
      <TitleBar />
      <ToolBar />
      <div className="flex min-h-0 flex-1">
        <Sidebar />
        <div className="flex min-w-0 flex-1 overflow-hidden bg-[#f7f7f7]">
          <div className="w-[62px] shrink-0 pl-4">
            <QuickTools />
          </div>
          <div className="flex flex-1 justify-center">
            <TaxForm />
          </div>
        </div>
        <ScrollBar />
        <RightRail />
      </div>
      <Taskbar />
    </div>
  );
}
